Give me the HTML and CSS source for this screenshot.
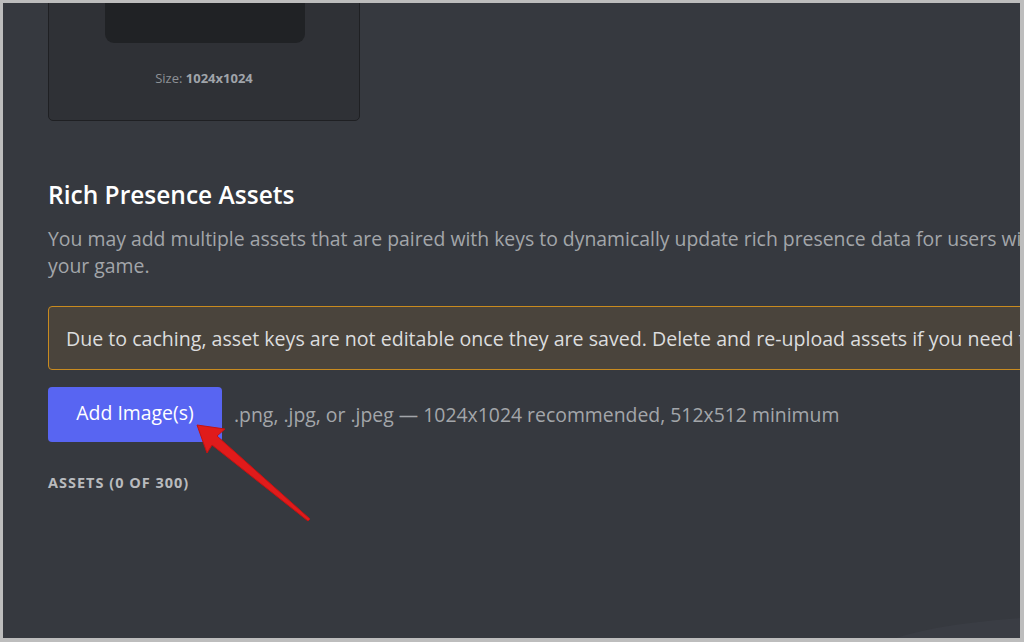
FILE: index.html
```html
<!DOCTYPE html>
<html lang="en">
<head>
    <meta charset="UTF-8">
    <meta name="viewport" content="width=device-width, initial-scale=1.0">
    <title>Rich Presence Assets</title>
    <link rel="stylesheet" href="styles.css">
</head>
<body>
    <div class="frame">
        <div class="page">
            <div class="content">
                <div class="cover-card">
                    <div class="cover-image"></div>
                    <div class="cover-size">Size: <strong>1024x1024</strong></div>
                </div>

                <h2 class="section-title">Rich Presence Assets</h2>
                <p class="section-desc">You may add multiple assets that are paired with keys to dynamically update rich presence data for users with your game.</p>

                <div class="notice">Due to caching, asset keys are not editable once they are saved. Delete and re-upload assets if you need to change them.</div>

                <div class="upload-row">
                    <button class="btn">Add Image(s)</button>
                    <span class="upload-hint">.png, .jpg, or .jpeg — 1024x1024 recommended, 512x512 minimum</span>
                </div>

                <div class="assets-label">Assets (0 of 300)</div>
            </div>

            <!-- background swoosh, bottom right -->
            <svg class="swoosh" width="124" height="22" viewBox="0 0 124 22">
                <path d="M0 22 C30 12 70 6 124 2 L124 22 Z" fill="#3a3d44"/>
            </svg>

            <!-- annotation arrow -->
            <svg class="arrow" width="130" height="110" viewBox="0 0 130 110">
                <path d="M1 4 L29 8 L21 15 L114 98 L112 100 L16 24 L11 32 Z" fill="#e01b1b" stroke="#c41212" stroke-width="1" stroke-linejoin="round"/>
            </svg>
        </div>
    </div>
</body>
</html>
```

FILE: styles.css
```css
html, body {
    margin: 0;
    height: 100%;
    overflow: hidden;
}
body {
    background-color: #c4c4c4;
    font-family: "Open Sans", "Noto Sans", sans-serif;
}
.frame {
    height: 100%;
    box-sizing: border-box;
    border-top: 3px solid #bdbdbd;
    border-left: 3px solid #bdbdbd;
    border-right: 4px solid #bdbdbd;
    border-bottom: 4px solid #bdbdbd;
}
.page {
    position: relative;
    height: 100%;
    background-color: #36393f;
    overflow: hidden;
}
.content {
    width: 1120px;
    padding-left: 45px;
}
.cover-card {
    width: 312px;
    height: 218px;
    margin-top: -100px;
    box-sizing: border-box;
    background-color: #2f3136;
    border: 1px solid #1f2023;
    border-radius: 5px;
    display: flex;
    flex-direction: column;
    align-items: center;
}
.cover-image {
    width: 200px;
    height: 139px;
    background-color: #202225;
    border-radius: 0 0 9px 9px;
    margin-left: 2px;
}
.cover-size {
    margin-top: 26px;
    font-size: 13px;
    color: #8e9297;
}
.cover-size strong {
    font-weight: 700;
    color: #a0a4aa;
}
.section-title {
    margin: 59px 0 0;
    font-size: 24.5px;
    font-weight: 600;
    line-height: 30px;
    color: #ffffff;
}
.section-desc {
    width: 1020px;
    margin: 15px 0 0;
    font-size: 19.4px;
    line-height: 27px;
    color: #a3a6aa;
}
.notice {
    margin-top: 27px;
    height: 64px;
    box-sizing: border-box;
    padding: 0 17px;
    display: flex;
    align-items: center;
    white-space: nowrap;
    background-color: #4a443c;
    border: 1px solid #c98b1f;
    border-radius: 4px;
    font-size: 19.6px;
    color: #dcddde;
}
.upload-row {
    margin-top: 17px;
    display: flex;
    align-items: center;
    gap: 12px;
}
.btn {
    width: 174px;
    height: 55px;
    background-color: #5865f2;
    color: #ffffff;
    border: none;
    border-radius: 4px;
    font-family: inherit;
    font-size: 19.4px;
    padding: 0 0 4px;
}
.upload-hint {
    font-size: 19.4px;
    color: #a3a6aa;
}
.assets-label {
    margin-top: 31px;
    font-size: 14.5px;
    font-weight: 700;
    letter-spacing: 1px;
    line-height: 19px;
    text-transform: uppercase;
    color: #b9bbbe;
}
.swoosh {
    position: absolute;
    right: 0;
    bottom: 0;
}
.arrow {
    position: absolute;
    left: 193px;
    top: 418px;
}
```
